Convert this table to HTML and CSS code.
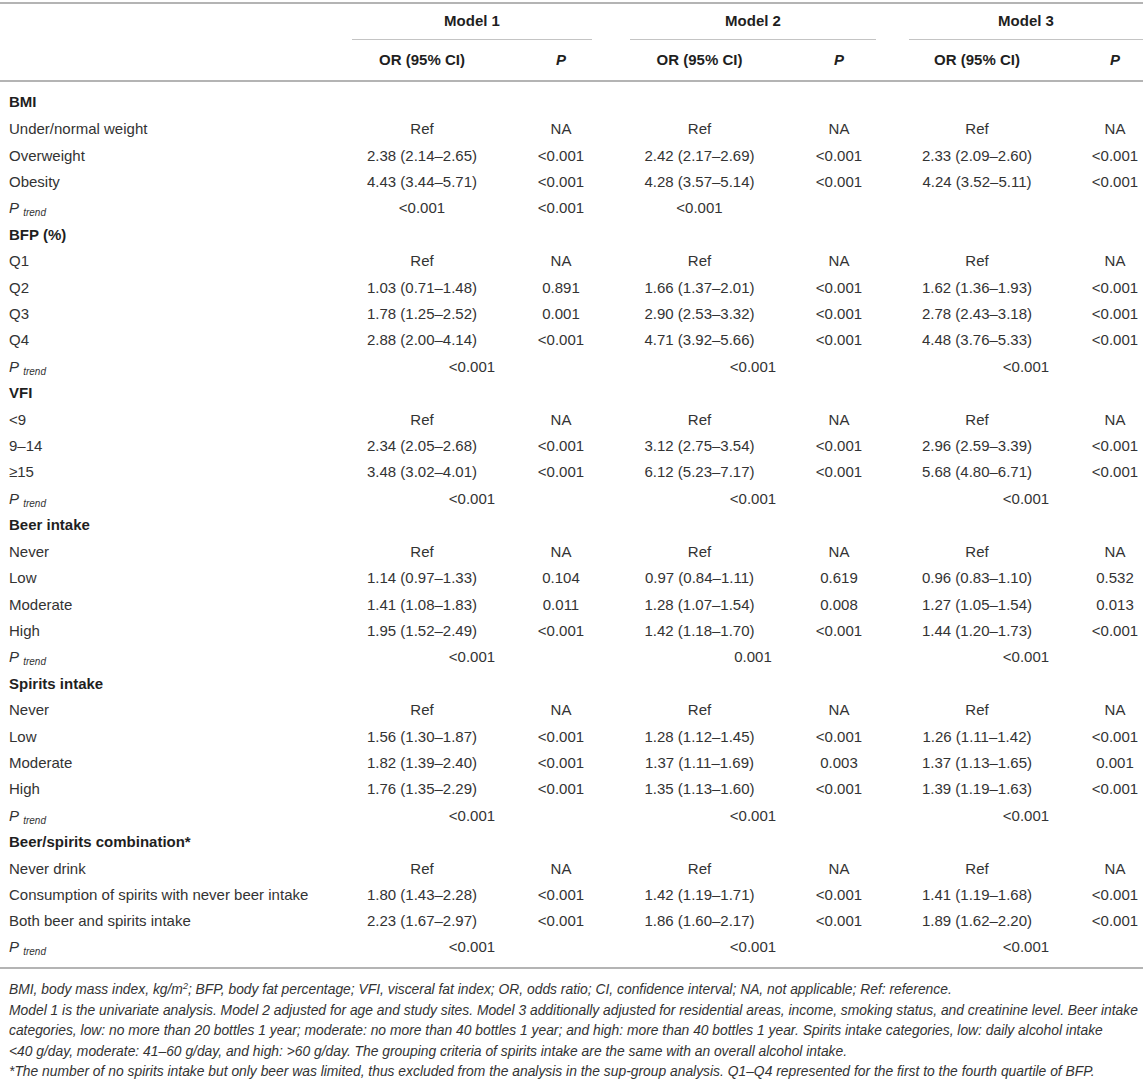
FILE: index.html
```html
<!DOCTYPE html>
<html lang="en">
<head>
  <meta charset="UTF-8">
  <title>Table – Odds ratios by model</title>
  <link rel="stylesheet" href="styles.css">
</head>
<body>
  <div class="table-wrap">
    <table class="results">
      <colgroup>
        <col class="col-label">
        <col class="col-or1">
        <col class="col-p1">
        <col class="col-or2">
        <col class="col-p2">
        <col class="col-or3">
        <col class="col-p3">
      </colgroup>
      <thead>
        <tr class="model-row">
          <th></th>
          <th colspan="2"><div class="span m1">Model 1</div></th>
          <th colspan="2"><div class="span m2">Model 2</div></th>
          <th colspan="2"><div class="span m3">Model 3</div></th>
        </tr>
        <tr class="sub-row">
          <th></th>
          <th>OR (95% CI)</th><th><i>P</i></th>
          <th>OR (95% CI)</th><th><i>P</i></th>
          <th>OR (95% CI)</th><th><i>P</i></th>
        </tr>
      </thead>
      <tbody>
        <tr class="group first"><td colspan="7">BMI</td></tr>
        <tr><td>Under/normal weight</td><td>Ref</td><td>NA</td><td>Ref</td><td>NA</td><td>Ref</td><td>NA</td></tr>
        <tr><td>Overweight</td><td>2.38 (2.14–2.65)</td><td>&lt;0.001</td><td>2.42 (2.17–2.69)</td><td>&lt;0.001</td><td>2.33 (2.09–2.60)</td><td>&lt;0.001</td></tr>
        <tr><td>Obesity</td><td>4.43 (3.44–5.71)</td><td>&lt;0.001</td><td>4.28 (3.57–5.14)</td><td>&lt;0.001</td><td>4.24 (3.52–5.11)</td><td>&lt;0.001</td></tr>
        <tr><td><i>P</i> <sub>trend</sub></td><td>&lt;0.001</td><td>&lt;0.001</td><td>&lt;0.001</td><td></td><td></td><td></td></tr>

        <tr class="group"><td colspan="7">BFP (%)</td></tr>
        <tr><td>Q1</td><td>Ref</td><td>NA</td><td>Ref</td><td>NA</td><td>Ref</td><td>NA</td></tr>
        <tr><td>Q2</td><td>1.03 (0.71–1.48)</td><td>0.891</td><td>1.66 (1.37–2.01)</td><td>&lt;0.001</td><td>1.62 (1.36–1.93)</td><td>&lt;0.001</td></tr>
        <tr><td>Q3</td><td>1.78 (1.25–2.52)</td><td>0.001</td><td>2.90 (2.53–3.32)</td><td>&lt;0.001</td><td>2.78 (2.43–3.18)</td><td>&lt;0.001</td></tr>
        <tr><td>Q4</td><td>2.88 (2.00–4.14)</td><td>&lt;0.001</td><td>4.71 (3.92–5.66)</td><td>&lt;0.001</td><td>4.48 (3.76–5.33)</td><td>&lt;0.001</td></tr>
        <tr><td><i>P</i> <sub>trend</sub></td><td colspan="2"><div class="span m1">&lt;0.001</div></td><td colspan="2"><div class="span m2">&lt;0.001</div></td><td colspan="2"><div class="span m3">&lt;0.001</div></td></tr>

        <tr class="group"><td colspan="7">VFI</td></tr>
        <tr><td>&lt;9</td><td>Ref</td><td>NA</td><td>Ref</td><td>NA</td><td>Ref</td><td>NA</td></tr>
        <tr><td>9–14</td><td>2.34 (2.05–2.68)</td><td>&lt;0.001</td><td>3.12 (2.75–3.54)</td><td>&lt;0.001</td><td>2.96 (2.59–3.39)</td><td>&lt;0.001</td></tr>
        <tr><td>≥15</td><td>3.48 (3.02–4.01)</td><td>&lt;0.001</td><td>6.12 (5.23–7.17)</td><td>&lt;0.001</td><td>5.68 (4.80–6.71)</td><td>&lt;0.001</td></tr>
        <tr><td><i>P</i> <sub>trend</sub></td><td colspan="2"><div class="span m1">&lt;0.001</div></td><td colspan="2"><div class="span m2">&lt;0.001</div></td><td colspan="2"><div class="span m3">&lt;0.001</div></td></tr>

        <tr class="group"><td colspan="7">Beer intake</td></tr>
        <tr><td>Never</td><td>Ref</td><td>NA</td><td>Ref</td><td>NA</td><td>Ref</td><td>NA</td></tr>
        <tr><td>Low</td><td>1.14 (0.97–1.33)</td><td>0.104</td><td>0.97 (0.84–1.11)</td><td>0.619</td><td>0.96 (0.83–1.10)</td><td>0.532</td></tr>
        <tr><td>Moderate</td><td>1.41 (1.08–1.83)</td><td>0.011</td><td>1.28 (1.07–1.54)</td><td>0.008</td><td>1.27 (1.05–1.54)</td><td>0.013</td></tr>
        <tr><td>High</td><td>1.95 (1.52–2.49)</td><td>&lt;0.001</td><td>1.42 (1.18–1.70)</td><td>&lt;0.001</td><td>1.44 (1.20–1.73)</td><td>&lt;0.001</td></tr>
        <tr><td><i>P</i> <sub>trend</sub></td><td colspan="2"><div class="span m1">&lt;0.001</div></td><td colspan="2"><div class="span m2">0.001</div></td><td colspan="2"><div class="span m3">&lt;0.001</div></td></tr>

        <tr class="group"><td colspan="7">Spirits intake</td></tr>
        <tr><td>Never</td><td>Ref</td><td>NA</td><td>Ref</td><td>NA</td><td>Ref</td><td>NA</td></tr>
        <tr><td>Low</td><td>1.56 (1.30–1.87)</td><td>&lt;0.001</td><td>1.28 (1.12–1.45)</td><td>&lt;0.001</td><td>1.26 (1.11–1.42)</td><td>&lt;0.001</td></tr>
        <tr><td>Moderate</td><td>1.82 (1.39–2.40)</td><td>&lt;0.001</td><td>1.37 (1.11–1.69)</td><td>0.003</td><td>1.37 (1.13–1.65)</td><td>0.001</td></tr>
        <tr><td>High</td><td>1.76 (1.35–2.29)</td><td>&lt;0.001</td><td>1.35 (1.13–1.60)</td><td>&lt;0.001</td><td>1.39 (1.19–1.63)</td><td>&lt;0.001</td></tr>
        <tr><td><i>P</i> <sub>trend</sub></td><td colspan="2"><div class="span m1">&lt;0.001</div></td><td colspan="2"><div class="span m2">&lt;0.001</div></td><td colspan="2"><div class="span m3">&lt;0.001</div></td></tr>

        <tr class="group"><td colspan="7">Beer/spirits combination*</td></tr>
        <tr><td>Never drink</td><td>Ref</td><td>NA</td><td>Ref</td><td>NA</td><td>Ref</td><td>NA</td></tr>
        <tr><td>Consumption of spirits with never beer intake</td><td>1.80 (1.43–2.28)</td><td>&lt;0.001</td><td>1.42 (1.19–1.71)</td><td>&lt;0.001</td><td>1.41 (1.19–1.68)</td><td>&lt;0.001</td></tr>
        <tr><td>Both beer and spirits intake</td><td>2.23 (1.67–2.97)</td><td>&lt;0.001</td><td>1.86 (1.60–2.17)</td><td>&lt;0.001</td><td>1.89 (1.62–2.20)</td><td>&lt;0.001</td></tr>
        <tr class="last"><td><i>P</i> <sub>trend</sub></td><td colspan="2"><div class="span m1">&lt;0.001</div></td><td colspan="2"><div class="span m2">&lt;0.001</div></td><td colspan="2"><div class="span m3">&lt;0.001</div></td></tr>
      </tbody>
    </table>

    <div class="notes">
      <p>BMI, body mass index, kg/m<sup>2</sup>; BFP, body fat percentage; VFI, visceral fat index; OR, odds ratio; CI, confidence interval; NA, not applicable; Ref: reference.</p>
      <p>Model 1 is the univariate analysis. Model 2 adjusted for age and study sites. Model 3 additionally adjusted for residential areas, income, smoking status, and creatinine level. Beer intake<br>categories, low: no more than 20 bottles 1 year; moderate: no more than 40 bottles 1 year; and high: more than 40 bottles 1 year. Spirits intake categories, low: daily alcohol intake<br>&lt;40 g/day, moderate: 41–60 g/day, and high: &gt;60 g/day. The grouping criteria of spirits intake are the same with an overall alcohol intake.</p>
      <p>*The number of no spirits intake but only beer was limited, thus excluded from the analysis in the sup-group analysis. Q1–Q4 represented for the first to the fourth quartile of BFP.</p>
    </div>
  </div>
</body>
</html>
```

FILE: styles.css
```css
:root {
  --text: #333;
  --head: #1f1f1f;
  --rule: #b4b4b4;
  --rule-light: #c4c4c4;
}

* {
  margin: 0;
  padding: 0;
  box-sizing: border-box;
}

body {
  background: #fff;
  color: var(--text);
  font-family: "Liberation Sans", Arial, Helvetica, sans-serif;
  font-size: 15px;
  padding-top: 2px;
}

.table-wrap {
  width: 1143px;
}

.results {
  width: 1143px;
  table-layout: fixed;
  border-collapse: collapse;
  border-top: 2px solid var(--rule);
}

.col-label { width: 352px; }
.col-or1 { width: 140px; }
.col-p1 { width: 138px; }
.col-or2 { width: 139px; }
.col-p2 { width: 140px; }
.col-or3 { width: 136px; }
.col-p3 { width: 98px; }

.results th,
.results td {
  padding: 0;
  text-align: center;
  vertical-align: middle;
  line-height: 17px;
  white-space: nowrap;
}

.results td:first-child {
  text-align: left;
  padding-left: 9px;
}

.results tr > :nth-child(7) {
  padding-left: 42px;
}

/* header */
.results th {
  font-weight: bold;
  color: var(--head);
}

.model-row th {
  height: 37px;
  vertical-align: bottom;
}

.model-row .span {
  padding: 0 0 10px;
  border-bottom: 1px solid var(--rule-light);
}

.sub-row th {
  height: 41px;
  border-bottom: 2px solid var(--rule);
  padding-bottom: 1px;
}

.m1 { margin-right: 38px; }
.m2 { margin-right: 33px; }
.m3 { margin-right: 0; }

/* body */
.results tbody td {
  height: 26.42px;
}

.results tbody .first td {
  height: 34.5px;
  padding-top: 11px;
  vertical-align: top;
}

.results tbody .group td {
  font-weight: bold;
  color: var(--head);
}

.results tbody .last td {
  height: 34px;
  padding-bottom: 8px;
  border-bottom: 2px solid var(--rule);
}

.results sub {
  font-size: 10px;
  font-style: italic;
  vertical-align: -3px;
  line-height: 0;
}

/* footnotes */
.notes {
  padding: 10px 0 0 9px;
  font-style: italic;
  font-size: 13.85px;
  line-height: 20.5px;
  color: var(--text);
}

.notes p {
  white-space: nowrap;
}

.notes sup {
  font-size: 9px;
  line-height: 0;
  vertical-align: 5px;
}
```
